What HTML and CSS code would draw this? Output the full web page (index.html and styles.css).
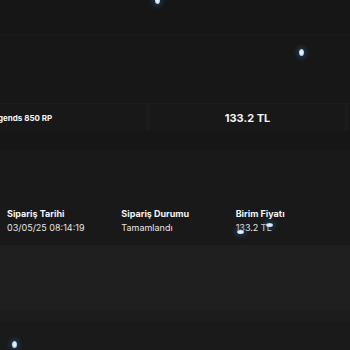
FILE: index.html
```html
<!DOCTYPE html>
<html lang="tr">
<head>
  <meta charset="UTF-8" />
  <title>Sipariş Detayı</title>
  <link rel="stylesheet" href="styles.css">
</head>
<body>
  <div class="page">
    <div class="topbar"></div>

    <!-- Product summary -->
    <div class="summary">
      <div class="summary-row">
        <div class="cell cell-name">League of Legends 850 RP</div>
        <div class="cell cell-price">133.2 TL</div>
        <div class="cell cell-rest"></div>
      </div>
    </div>

    <div class="spacer"></div>

    <!-- Order info -->
    <div class="details">
      <div class="detail">
        <span class="label">Sipariş Tarihi</span>
        <span class="value">03/05/25 08:14:19</span>
      </div>
      <div class="detail">
        <span class="label">Sipariş Durumu</span>
        <span class="value">Tamamlandı</span>
      </div>
      <div class="detail">
        <span class="label">Birim Fiyatı</span>
        <span class="value">133.2 TL</span>
      </div>
    </div>

    <div class="band"></div>
    <div class="footer">
      <div class="footer-line"></div>
      <div class="footer-line dark"></div>
    </div>

    <!-- snow particles -->
    <span class="flake" style="left:155px; top:-3px"></span>
    <span class="flake" style="left:299px; top:49px"></span>
    <span class="flake small" style="left:266px; top:223px"></span>
    <span class="flake small" style="left:237px; top:230px"></span>
    <span class="flake" style="left:12px; top:341px"></span>
  </div>
</body>
</html>
```

FILE: styles.css
```css
:root {
  --bg: #161616;
  --panel: #171717;
  --card: #191919;
  --band: #1f1f1f;
  --text: #f4f4f4;
  --muted: #e4e4e4;
}

body {
  margin: 0;
  background: var(--bg);
  font-family: 'Inter', sans-serif;
  color: var(--text);
  overflow: hidden;
}

.page {
  position: relative;
  width: 350px;
  height: 350px;
  overflow: hidden;
}

.topbar {
  height: 34px;
  background: #161616;
  border-bottom: 1px solid #1b1b1b;
}

.summary {
  height: 96px;
  background: var(--panel);
  display: flex;
  flex-direction: column;
  justify-content: flex-end;
}

.summary-row {
  display: flex;
  height: 27px;
  margin-left: -60px;
  border-top: 1px solid #1c1c1c;
  background: #181818;
}

.cell {
  display: flex;
  align-items: center;
  font-weight: 600;
  white-space: nowrap;
}

.cell-name {
  width: 198px;
  padding-left: 8px;
  font-size: 8px;
  font-weight: 700;
  border-right: 4px solid #1c1c1c;
}

.cell-price {
  width: 195px;
  justify-content: center;
  font-size: 11px;
  font-weight: 700;
  border-right: 3px solid #1c1c1c;
}

.cell-rest {
  flex: 1;
}

.spacer {
  height: 19px;
  background: #161616;
}

.details {
  height: 95px;
  background: var(--card);
  display: flex;
  padding: 58px 0 0 7px;
  box-sizing: border-box;
}

.detail {
  width: 115px;
  display: flex;
  flex-direction: column;
  gap: 3px;
  font-size: 9px;
}

.label {
  font-weight: 700;
}

.value {
  color: var(--muted);
}

.band {
  height: 65px;
  background: var(--band);
}

.footer {
  height: 40px;
  background: #1a1a1a;
}

.footer-line {
  height: 12px;
  background: #1c1c1c;
}

.footer-line.dark {
  height: 14px;
  background: #1a1a1a;
}

.flake {
  position: absolute;
  width: 5px;
  height: 7px;
  border-radius: 50%;
  background: radial-gradient(ellipse at center, #f4f8ff 0, #d6e6f8 45%, #8fb3d6 80%);
  box-shadow: 0 0 4px 3px rgba(40, 80, 120, 0.45);
}

.flake.small {
  width: 7px;
  height: 4px;
}
```
